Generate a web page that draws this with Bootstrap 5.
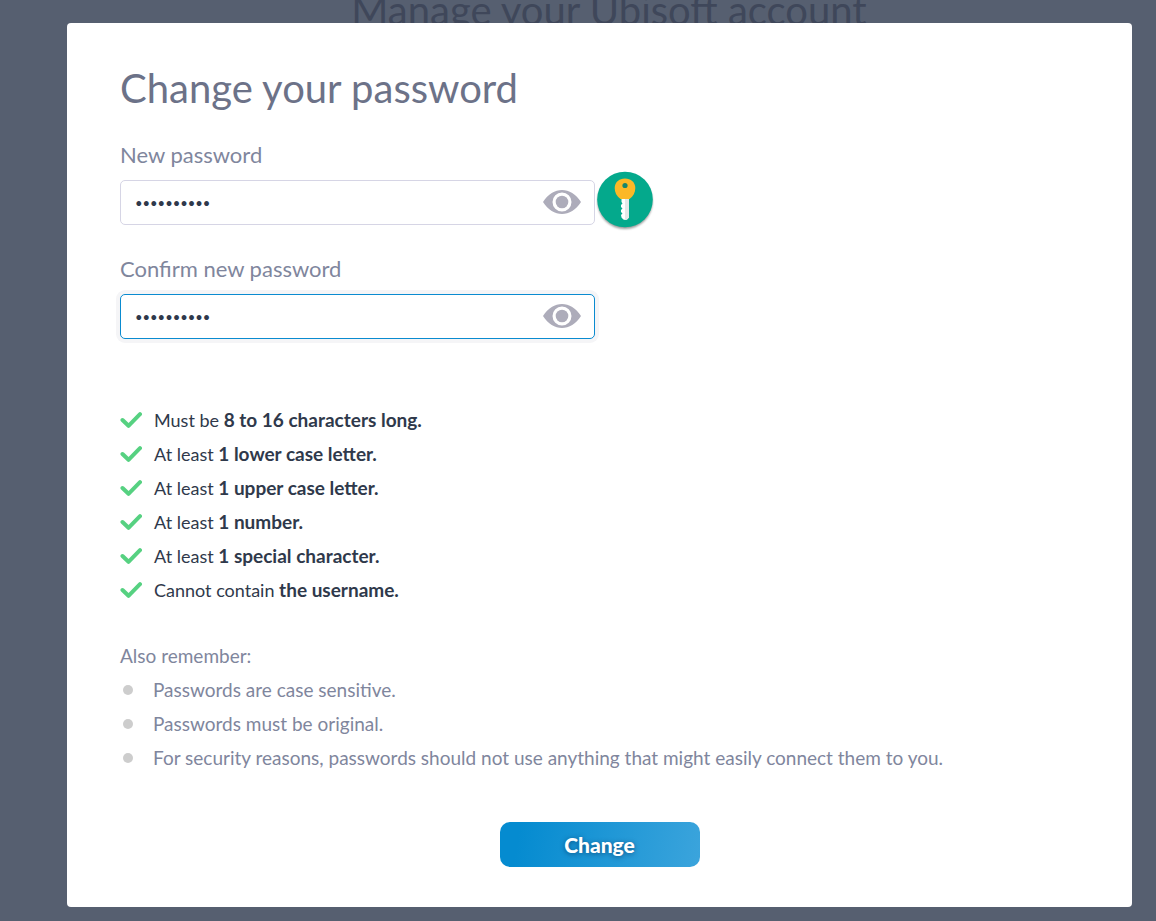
<!DOCTYPE html>
<html lang="en">
<head>
<meta charset="utf-8">
<meta name="viewport" content="width=device-width, initial-scale=1">
<title>Change your password</title>
<link href="https://cdn.jsdelivr.net/npm/bootstrap@5.3.0/dist/css/bootstrap.min.css" rel="stylesheet">
<style>
body { font-family: Lato, "Liberation Sans", sans-serif; background: #565f70; color: #2f394b; }
.page-title { font-size: 40px; line-height: 48px; color: #3f475a; margin: -14px 0 0 62px; }
.overlay { inset: 0 0 auto 0; padding: 23px 24px 14px 67px; }
.dialog-panel { border-radius: 4px; padding: 41px 53px 40px; }
.dialog-title { font-size: 40px; line-height: 48px; color: #6c7288; margin-bottom: 32px; }
.field-group { max-width: 475px; margin-bottom: 33px; }
.field-label { font-size: 22px; line-height: 22px; color: #7f869d; margin-bottom: 14px; }
.pw-input { height: 45px; border-color: #d6d5e5; border-radius: 5px; padding: 0 64px 0 14px; font-family: Lato, "Liberation Sans", sans-serif; font-size: 13px; color: #2f394b; }
.pw-input.active, .pw-input:focus { border-color: #0a8bd0; box-shadow: 0 0 0 4px #f5f5f7; }
.eye-btn { right: 14px; top: 10px; width: 38px; height: 24px; }
.key-btn { left: 100%; top: -10px; margin-left: 1px; width: 58px; height: 62px; }
.eye-btn svg, .key-btn svg { display: block; }
.rules { margin: 64px 0 32px; font-size: 18px; line-height: 34px; }
.rules b { font-size: 19px; }
.rules li, .notes li { height: 34px; }
.rules li { gap: 12px; }
.notes { font-size: 19px; line-height: 34px; color: #7f869d; margin-bottom: 47px; }
.notes li { gap: 20px; }
.dot { width: 10px; height: 10px; margin-left: 3px; background: #cdcdcd; }
.change-btn { width: 200px; height: 45px; border: 0; border-radius: 10px; color: #fff; font-size: 21px; font-weight: 900; background: linear-gradient(100deg, #058bd0 10%, #3ba4dc); text-shadow: 0 1px 5px rgba(0, 40, 80, .6); }
@media (max-width: 991.98px) {
  .rules li, .notes li { height: auto; }
}
</style>
</head>
<body>
<svg class="d-none" aria-hidden="true">
  <symbol id="eye" viewBox="0 0 38 24"><path fill="#adacba" fill-rule="evenodd" d="M0 12C5 4 12 0 19 0s14 4 19 12c-5 8-12 12-19 12S5 20 0 12zM19 2.500a9.500 9.500 0 1 0 0 19 9.500 9.500 0 0 0 0-19z"/><circle cx="19" cy="12" r="6.300" fill="#adacba"/></symbol>
  <symbol id="tick" viewBox="0 0 22 16"><path d="M2.500 8l6 5.800L20 2.200" fill="none" stroke="#56d181" stroke-width="4" stroke-linecap="round" stroke-linejoin="round"/></symbol>
</svg>
<div class="position-relative overflow-hidden">
  <h1 class="page-title text-center fw-normal">Manage your Ubisoft account</h1>
</div>
<div class="overlay position-absolute">
  <main class="dialog-panel bg-white" role="dialog" aria-labelledby="dialog-title">
    <form>
      <h2 class="dialog-title fw-normal" id="dialog-title">Change your password</h2>
      <div class="field-group">
        <label class="field-label d-block" for="new-pw">New password</label>
        <div class="position-relative">
          <input class="pw-input form-control" id="new-pw" type="password" value="Abcdef12#x">
          <button type="button" class="eye-btn btn p-0 border-0 position-absolute" aria-label="Show password"><svg width="38" height="24"><use href="#eye"/></svg></button>
          <button type="button" class="key-btn btn p-0 border-0 position-absolute" aria-label="Password manager">
            <svg width="58" height="62" viewBox="0 0 58 62">
              <defs><filter id="soft" x="-20%" y="-20%" width="140%" height="140%"><feGaussianBlur stdDeviation="1.200"/></filter></defs>
              <circle cx="29" cy="31.500" r="27.500" fill="#000" opacity=".4" filter="url(#soft)"/>
              <circle cx="29" cy="29.500" r="27.800" fill="#04a98c"/>
              <path d="M25.500 27H33v20.500q-3.800 5-7.500 0l-.5-2.500 1.500-1.500-1.500-1.500v-2l1.500-1.500-1.500-1.500v-2l1.500-1.500-1-1.500z" fill="#fff"/>
              <path d="M29 27h4v20.500q-2 2.500-4 2.500z" fill="#e3e8e8"/>
              <path d="M29 8.500c6 0 10.300 4 10.300 9.500 0 4.500-2 8.500-5.800 11h-9c-3.800-2.500-5.800-6.500-5.800-11C18.700 12.500 23 8.500 29 8.500z" fill="#fcb826"/>
              <circle cx="29" cy="15.500" r="2.600" fill="#16866b"/>
            </svg>
          </button>
        </div>
      </div>
      <div class="field-group">
        <label class="field-label d-block" for="confirm-pw">Confirm new password</label>
        <div class="position-relative">
          <input class="pw-input active form-control" id="confirm-pw" type="password" value="Abcdef12#x">
          <button type="button" class="eye-btn btn p-0 border-0 position-absolute" aria-label="Show password"><svg width="38" height="24"><use href="#eye"/></svg></button>
        </div>
      </div>
      <ul class="rules list-unstyled">
        <li class="d-flex align-items-center"><svg width="22" height="16"><use href="#tick"/></svg><span>Must be <b>8 to 16 characters long.</b></span></li>
        <li class="d-flex align-items-center"><svg width="22" height="16"><use href="#tick"/></svg><span>At least <b>1 lower case letter.</b></span></li>
        <li class="d-flex align-items-center"><svg width="22" height="16"><use href="#tick"/></svg><span>At least <b>1 upper case letter.</b></span></li>
        <li class="d-flex align-items-center"><svg width="22" height="16"><use href="#tick"/></svg><span>At least <b>1 number.</b></span></li>
        <li class="d-flex align-items-center"><svg width="22" height="16"><use href="#tick"/></svg><span>At least <b>1 special character.</b></span></li>
        <li class="d-flex align-items-center"><svg width="22" height="16"><use href="#tick"/></svg><span>Cannot contain <b>the username.</b></span></li>
      </ul>
      <div class="notes">
        <p class="mb-0">Also remember:</p>
        <ul class="list-unstyled mb-0">
          <li class="d-flex align-items-center"><i class="dot rounded-circle flex-shrink-0"></i><span>Passwords are case sensitive.</span></li>
          <li class="d-flex align-items-center"><i class="dot rounded-circle flex-shrink-0"></i><span>Passwords must be original.</span></li>
          <li class="d-flex align-items-center"><i class="dot rounded-circle flex-shrink-0"></i><span>For security reasons, passwords should not use anything that might easily connect them to you.</span></li>
        </ul>
      </div>
      <div class="text-center">
        <button type="submit" class="change-btn btn d-block mx-auto p-0">Change</button>
      </div>
    </form>
  </main>
</div>
<script src="https://cdn.jsdelivr.net/npm/bootstrap@5.3.0/dist/js/bootstrap.bundle.min.js"></script>
</body>
</html>
